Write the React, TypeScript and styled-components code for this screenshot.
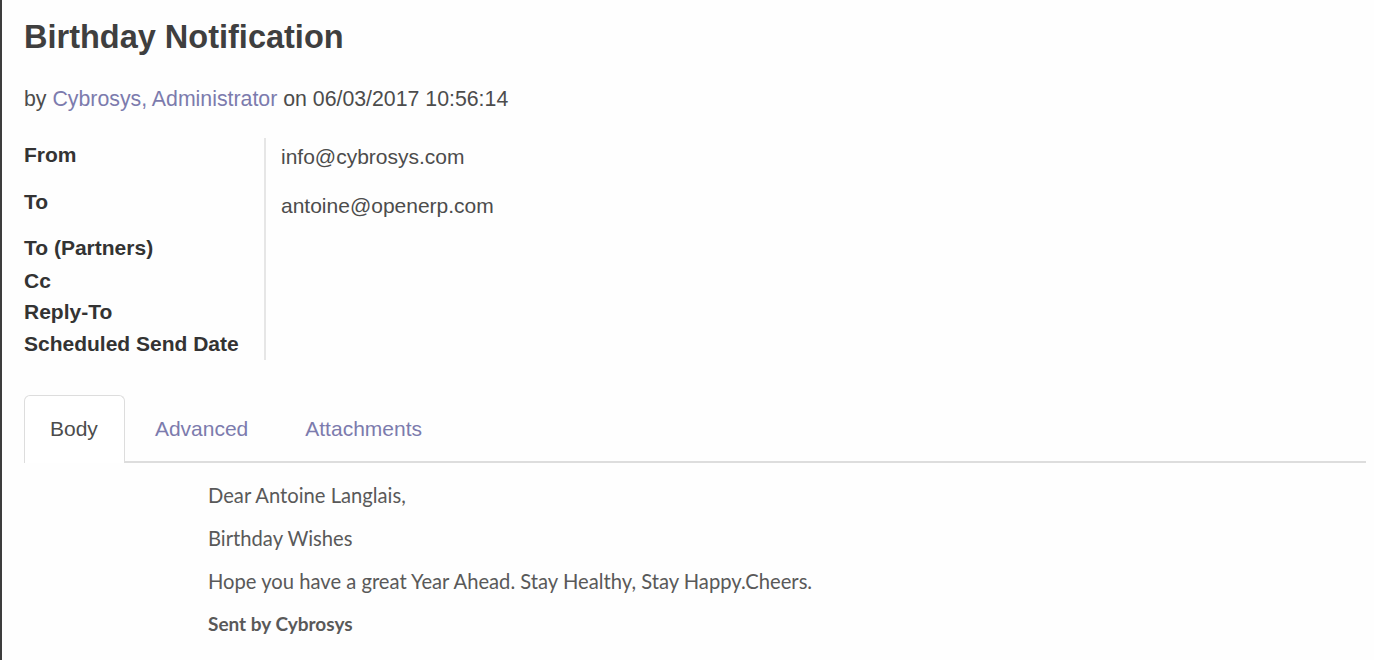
import React from "react";
import styled, { createGlobalStyle } from "styled-components";

const COLORS = {
  text: "#4c4c4c",
  link: "#7c7bad",
  border: "#dddddd",
  frame: "#3d3d3d",
};

const GlobalStyle = createGlobalStyle`
  html, body {
    margin: 0;
    padding: 0;
    background: #fefefe;
  }
  body {
    font-family: "Liberation Sans", Arial, sans-serif;
    color: ${COLORS.text};
  }
`;

const StyledPage = styled.div`
  border-left: 2px solid ${COLORS.frame};
  min-height: 660px;
  box-sizing: border-box;
  padding: 17px 8px 0 22px;
`;

const StyledTitle = styled.h1`
  margin: 0;
  font-size: 32.5px;
  font-weight: bold;
  line-height: 40px;
  color: #3f3f3f;
`;

const StyledByline = styled.div`
  margin-top: 29px;
  font-size: 21.3px;
  line-height: 26px;
`;

const StyledLink = styled.span`
  color: ${COLORS.link};
`;

const StyledFields = styled.div`
  margin-top: 26px;
  display: grid;
  grid-template-columns: 242px 1fr;
`;

const StyledLabels = styled.div`
  display: flex;
  flex-direction: column;
  padding-top: 5px;
  border-right: 2px solid #e6e6e6;
`;

const StyledLabel = styled.div<{ $gap: number }>`
  font-size: 21px;
  font-weight: bold;
  line-height: 24px;
  height: ${(p) => p.$gap}px;
  color: #333;
`;

const StyledValues = styled.div`
  display: flex;
  flex-direction: column;
  padding-left: 15px;
  padding-top: 7px;
`;

const StyledValue = styled.div`
  font-size: 21px;
  line-height: 24px;
  height: 49px;
`;

const StyledTabs = styled.div`
  margin-top: 35px;
  display: flex;
  border-bottom: 2px solid ${COLORS.border};
  height: 66px;
`;

const StyledTab = styled.div<{ $active?: boolean }>`
  font-size: 21px;
  padding: 0 26px 2px 25px;
  margin-right: 4px;
  margin-bottom: -2px;
  height: 68px;
  display: flex;
  align-items: center;
  box-sizing: border-box;
  color: ${(p) => (p.$active ? COLORS.text : COLORS.link)};
  border: 1px solid ${(p) => (p.$active ? COLORS.border : "transparent")};
  border-bottom: none;
  border-radius: 6px 6px 0 0;
  background: ${(p) => (p.$active ? "#fff" : "transparent")};
`;

const StyledBody = styled.div`
  padding: 20px 0 0 184px;
  font-family: Lato, "Open Sans", sans-serif;
  color: #595959;
`;

const StyledParagraph = styled.p`
  margin: 0 0 19px;
  font-size: 20.2px;
  line-height: 24px;
`;

const StyledSignature = styled.p`
  margin: 0;
  font-size: 19px;
  font-weight: bold;
  line-height: 24px;
`;

const labels = [
  { text: "From", gap: 47 },
  { text: "To", gap: 46 },
  { text: "To (Partners)", gap: 33 },
  { text: "Cc", gap: 31 },
  { text: "Reply-To", gap: 32 },
  { text: "Scheduled Send Date", gap: 28 },
];

export default function App() {
  return (
    <StyledPage>
      <GlobalStyle />
      <StyledTitle>Birthday Notification</StyledTitle>
      <StyledByline>
        by <StyledLink>Cybrosys, Administrator</StyledLink> on 06/03/2017 10:56:14
      </StyledByline>

      <StyledFields>
        <StyledLabels>
          {labels.map((l) => (
            <StyledLabel key={l.text} $gap={l.gap}>
              {l.text}
            </StyledLabel>
          ))}
        </StyledLabels>
        <StyledValues>
          <StyledValue>info@cybrosys.com</StyledValue>
          <StyledValue>antoine@openerp.com</StyledValue>
        </StyledValues>
      </StyledFields>

      <StyledTabs>
        <StyledTab $active>Body</StyledTab>
        <StyledTab>Advanced</StyledTab>
        <StyledTab>Attachments</StyledTab>
      </StyledTabs>

      <StyledBody>
        <StyledParagraph>Dear Antoine Langlais,</StyledParagraph>
        <StyledParagraph>Birthday Wishes</StyledParagraph>
        <StyledParagraph>
          Hope you have a great Year Ahead. Stay Healthy, Stay Happy.Cheers.
        </StyledParagraph>
        <StyledSignature>Sent by Cybrosys</StyledSignature>
      </StyledBody>
    </StyledPage>
  );
}
